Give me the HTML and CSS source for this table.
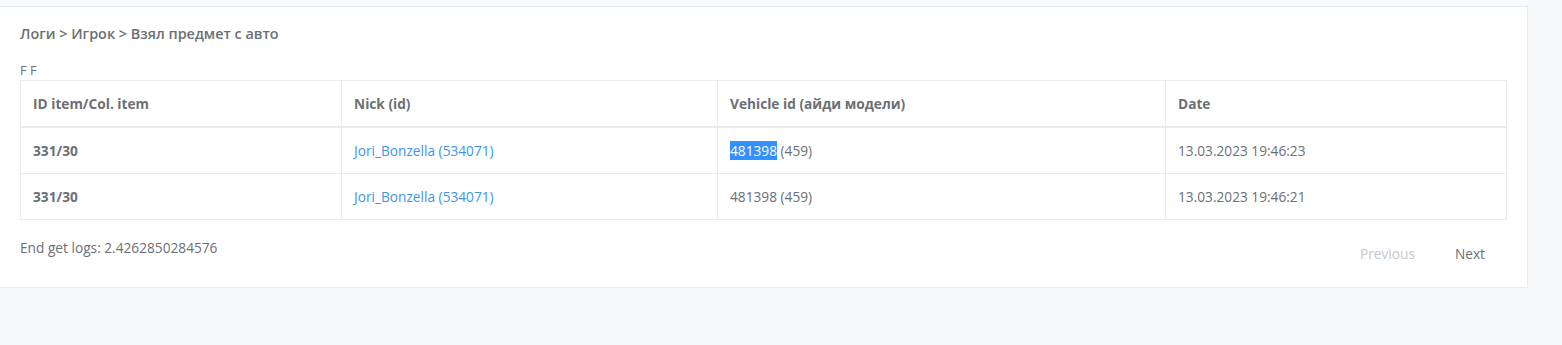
FILE: index.html
```html
<!DOCTYPE html>
<html lang="ru">
<head>
<meta charset="utf-8">
<link rel="stylesheet" href="styles.css">
</head>
<body>
<div class="page">
  <div class="card">
    <div class="breadcrumb">Логи &gt; Игрок &gt; Взял предмет с авто</div>
    <div class="label">F F</div>
    <table class="logs">
      <colgroup>
        <col class="c1"><col class="c2"><col class="c3"><col class="c4">
      </colgroup>
      <thead>
        <tr>
          <th>ID item/Col. item</th>
          <th>Nick (id)</th>
          <th>Vehicle id (айди модели)</th>
          <th>Date</th>
        </tr>
      </thead>
      <tbody>
        <tr>
          <td class="strong">331/30</td>
          <td><a class="link" href="#">Jori_Bonzella (534071)</a></td>
          <td><span class="sel">481398</span> (459)</td>
          <td>13.03.2023 19:46:23</td>
        </tr>
        <tr>
          <td class="strong">331/30</td>
          <td><a class="link" href="#">Jori_Bonzella (534071)</a></td>
          <td>481398 (459)</td>
          <td>13.03.2023 19:46:21</td>
        </tr>
      </tbody>
    </table>
    <div class="footer">
      <div class="timing">End get logs: 2.4262850284576</div>
      <div class="pager">
        <span class="page-btn disabled">Previous</span>
        <span class="page-btn">Next</span>
      </div>
    </div>
  </div>
</div>
</body>
</html>
```
FILE: styles.css
```css
html, body {
  margin: 0;
  padding: 0;
  background: #f8f9fa;
}
body {
  font-family: "Open Sans", "Noto Sans", sans-serif;
  font-size: 13.7px;
  color: #6c6f73;
}
.page {
  padding-top: 6px;
}
.card {
  box-sizing: border-box;
  width: 1529px;
  height: 282px;
  margin-left: -1px;
  background: #fff;
  border: 1px solid #e9ecef;
  padding: 17px 20px 0 20px;
}
.breadcrumb {
  font-weight: 600;
  font-size: 14.4px;
  line-height: 20px;
  color: #6c6f73;
}
.label {
  margin-top: 17px;
  line-height: 19px;
  font-size: 12.8px;
}
.logs {
  width: 1486px;
  border-collapse: collapse;
  table-layout: fixed;
  border: 1px solid #e9ecef;
}
.c1 { width: 321px; }
.c2 { width: 376px; }
.c3 { width: 448px; }
.c4 { width: 341px; }
.logs th, .logs td {
  border: 1px solid #e9ecef;
  text-align: left;
  padding: 0 12px;
  white-space: nowrap;
}
.logs th {
  height: 45px;
  font-weight: 700;
  border-bottom: 2px solid #e9ecef;
}
.logs td {
  height: 45px;
}
.strong {
  font-weight: 700;
}
.link {
  color: #3d95e8;
  text-decoration: none;
}
.sel {
  background: #3390ff;
  color: #fff;
}
.footer {
  display: flex;
  justify-content: space-between;
  align-items: flex-start;
  padding-top: 18px;
}
.timing {
  line-height: 20px;
}
.pager {
  display: flex;
  padding-top: 6px;
  margin-right: 2px;
}
.page-btn {
  padding: 0 20px;
  line-height: 20px;
  color: #6c6f73;
}
.page-btn.disabled {
  color: #c6c8ca;
}
```
